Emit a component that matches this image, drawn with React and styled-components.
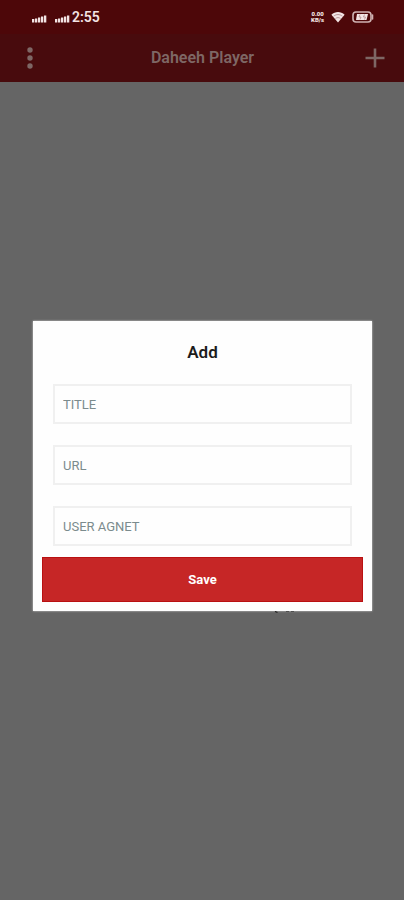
import React, { useState } from 'react'
import styled, { createGlobalStyle } from 'styled-components'

const GlobalStyle = createGlobalStyle`
  * {
    box-sizing: border-box;
  }
  body {
    margin: 0;
    background: #656565;
    font-family: Roboto, "Liberation Sans", sans-serif;
  }
`

const Screen = styled.div`
  position: relative;
  display: flex;
  flex-direction: column;
  min-height: 100vh;
`

const StatusBar = styled.div`
  display: flex;
  align-items: center;
  justify-content: space-between;
  height: 34px;
  padding: 0 30px 0 32px;
  background: #4d0709;
  color: #f3e4e4;
`

const StatusGroup = styled.div`
  display: flex;
  align-items: center;
  gap: ${({ $gap }) => $gap}px;
`

const Signals = styled.div`
  display: flex;
  gap: 8px;
  padding-top: 4px;
`

const Clock = styled.span`
  font-size: 14px;
  line-height: 16px;
  font-weight: 600;
`

const NetSpeed = styled.span`
  display: flex;
  flex-direction: column;
  align-items: center;
  font-size: 6px;
  line-height: 6px;
  font-weight: 900;
`

const AppBar = styled.header`
  display: grid;
  grid-template-columns: 32px 1fr 32px;
  align-items: center;
  height: 48px;
  padding: 0 13px 0 14px;
  background: #480b0d;
  color: #7e6765;
`

const IconButton = styled.button`
  display: flex;
  align-items: center;
  justify-content: center;
  height: 32px;
  padding: 0;
  border: none;
  background: none;
  color: inherit;
`

const AppTitle = styled.h1`
  margin: 0;
  font-size: 16px;
  line-height: 20px;
  font-weight: 600;
  text-align: center;
`

const Content = styled.main`
  flex: 1;
  background: #656565;
`

const Overlay = styled.div`
  position: absolute;
  inset: 0;
  display: flex;
  flex-direction: column;
  justify-content: center;
  padding: 32px 32px 0 33px;
`

const Dialog = styled.form`
  position: relative;
  display: flex;
  flex-direction: column;
  padding: 19px 9px 9px;
  background: #fefefe;
  box-shadow: 0 0 2px #d0d0d0;
`

const DialogTitle = styled.h2`
  margin: 0 0 20px;
  color: #1c1c1c;
  font-size: 17px;
  line-height: 24px;
  font-weight: 600;
  text-align: center;
`

const Fields = styled.div`
  display: flex;
  flex-direction: column;
  gap: 21px;
  padding: 0 11px;
`

const Field = styled.input`
  width: 100%;
  height: 40px;
  padding: 0 8px;
  border: 2px solid #f0f0f0;
  border-radius: 0;
  background: #fefefe;
  color: #333;
  font-family: inherit;
  font-size: 13px;

  &::placeholder {
    color: #7b8b8d;
    opacity: 1;
  }
`

const SaveButton = styled.button`
  height: 45px;
  margin-top: 11px;
  border: 1px solid #b91011;
  background: #c62626;
  color: #fff;
  font-family: inherit;
  font-size: 13px;
  font-weight: 700;
`

// bottom edge of the list text that sticks out under the dialog
const Underlap = styled.svg`
  position: absolute;
  top: 100%;
  left: 71%;
`

const SignalIcon = () => (
  <svg width="15" height="8" viewBox="0 0 15 8" fill="currentColor" aria-hidden="true">
    <rect x="0" y="4" width="2.3" height="3.5" />
    <rect x="3" y="3.5" width="2.3" height="4" />
    <rect x="6" y="2.5" width="2.3" height="5" />
    <rect x="9" y="1.5" width="2.3" height="6" />
    <rect x="12" y="0.5" width="2.3" height="7" />
  </svg>
)

const WifiIcon = () => (
  <svg width="14" height="12" viewBox="0 0 14 12" aria-hidden="true">
    <path d="M.4 3.8C4.2.1 9.8.1 13.6 3.8L7 11.6Z" fill="currentColor" />
    <path d="M2.6 5.2c2.7-2.2 6.1-2.2 8.8 0M4.5 7.5c1.5-1.2 3.5-1.2 5 0" fill="none" stroke="#a98486" strokeWidth=".8" />
  </svg>
)

const BatteryIcon = () => (
  <svg width="22" height="12" viewBox="0 0 22 12" aria-hidden="true">
    <rect x="1" y="1" width="18" height="10" rx="3" fill="none" stroke="#cfb3b3" strokeWidth="1.6" />
    <path d="M20.5 4v4" stroke="#cfb3b3" strokeWidth="1.6" strokeLinecap="round" />
    <path d="M5 3h11l-1.5 6H4Z" fill="currentColor" />
    <path d="M8 3.5 7 6h2L8 8.5M12.5 3.5l-1 2.5h2l-1 2.5" fill="none" stroke="#b38d8e" strokeWidth=".8" />
  </svg>
)

const MenuIcon = () => (
  <svg width="8" height="24" viewBox="0 0 8 24" fill="currentColor" aria-hidden="true">
    <circle cx="4" cy="4" r="2.7" />
    <circle cx="4" cy="12" r="2.7" />
    <circle cx="4" cy="20" r="2.7" />
  </svg>
)

const PlusIcon = () => (
  <svg width="20" height="20" viewBox="0 0 20 20" aria-hidden="true">
    <path d="M10 .5v19M.5 10h19" stroke="currentColor" strokeWidth="2.6" />
  </svg>
)

const FIELDS = [
  { name: 'title', label: 'TITLE' },
  { name: 'url', label: 'URL' },
  { name: 'agent', label: 'USER AGNET' },
]

const App = () => {
  const [values, setValues] = useState({ title: '', url: '', agent: '' })

  return (
    <Screen>
      <GlobalStyle />
      <StatusBar>
        <StatusGroup $gap={2}>
          <Signals>
            <SignalIcon />
            <SignalIcon />
          </Signals>
          <Clock>2:55</Clock>
        </StatusGroup>
        <StatusGroup $gap={7}>
          <NetSpeed>
            <span>0.00</span>
            <span>KB/s</span>
          </NetSpeed>
          <WifiIcon />
          <BatteryIcon />
        </StatusGroup>
      </StatusBar>
      <AppBar>
        <IconButton type="button" aria-label="Menu"><MenuIcon /></IconButton>
        <AppTitle>Daheeh Player</AppTitle>
        <IconButton type="button" aria-label="Add playlist"><PlusIcon /></IconButton>
      </AppBar>
      <Content />
      <Overlay>
        <Dialog
          role="dialog"
          aria-labelledby="add-title"
          onSubmit={(e) => e.preventDefault()}
        >
          <DialogTitle id="add-title">Add</DialogTitle>
          <Fields>
            {FIELDS.map(({ name, label }) => (
              <Field
                key={name}
                name={name}
                aria-label={label}
                placeholder={label}
                value={values[name]}
                onChange={(e) => setValues({ ...values, [name]: e.target.value })}
              />
            ))}
          </Fields>
          <SaveButton type="submit">Save</SaveButton>
          <Underlap width="22" height="3" viewBox="0 0 22 3" aria-hidden="true">
            <path d="M1 .5 3.5 1.5" stroke="#222" strokeWidth="1.2" />
            <path d="M12 .5h3M17 .5h3" stroke="#505050" />
          </Underlap>
        </Dialog>
      </Overlay>
    </Screen>
  )
}

export default App
